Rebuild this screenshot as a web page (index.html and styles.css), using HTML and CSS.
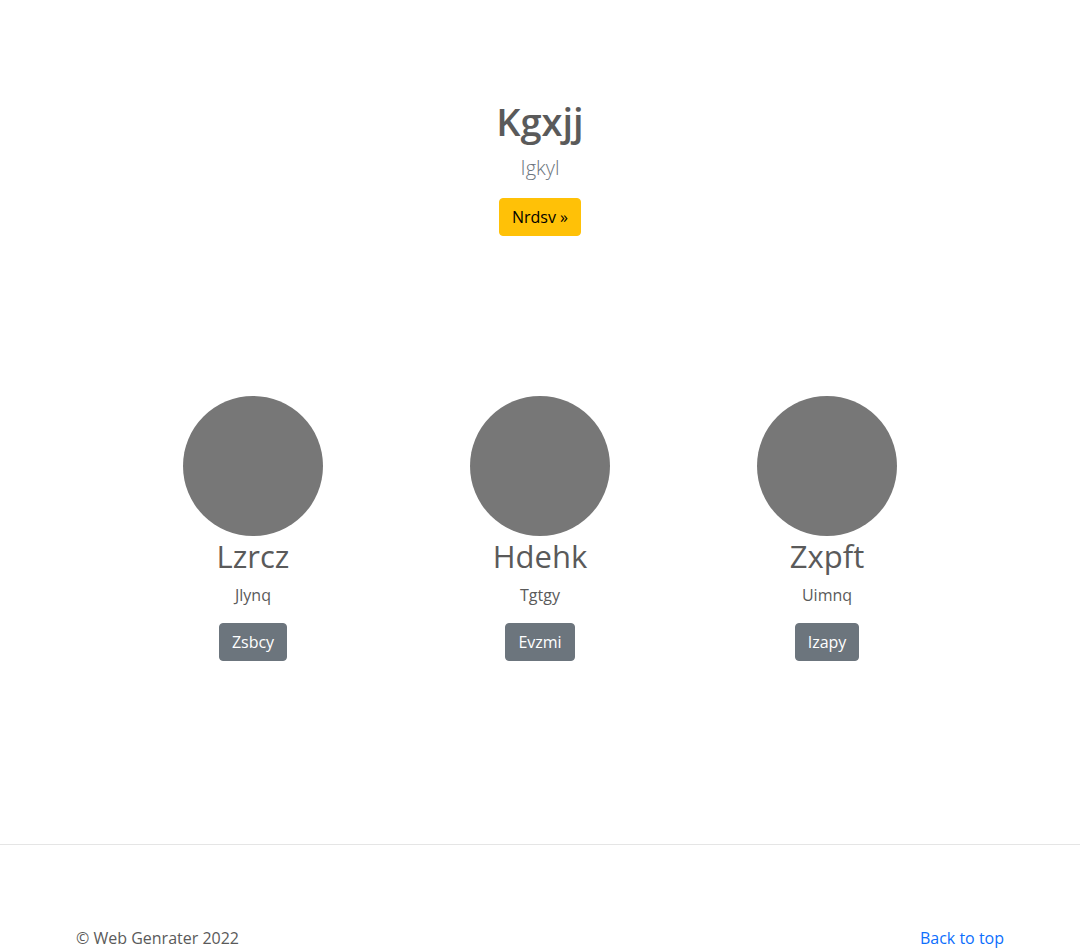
FILE: index.html
```html
<!DOCTYPE html>
<html lang="en">
<head>
<meta charset="utf-8">
<title>Kgxjj</title>
<link rel="stylesheet" href="styles.css">
</head>
<body>
<main>
  <section class="hero">
    <h1 class="hero-title">Kgxjj</h1>
    <p class="lead">Igkyl</p>
    <a class="btn btn-warning" href="#">Nrdsv »</a>
  </section>
  <section class="marketing">
    <div class="feature">
      <div class="circle"></div>
      <h2 class="feature-title">Lzrcz</h2>
      <p class="feature-text">Jlynq</p>
      <a class="btn btn-secondary" href="#">Zsbcy</a>
    </div>
    <div class="feature">
      <div class="circle"></div>
      <h2 class="feature-title">Hdehk</h2>
      <p class="feature-text">Tgtgy</p>
      <a class="btn btn-secondary" href="#">Evzmi</a>
    </div>
    <div class="feature">
      <div class="circle"></div>
      <h2 class="feature-title">Zxpft</h2>
      <p class="feature-text">Uimnq</p>
      <a class="btn btn-secondary" href="#">Izapy</a>
    </div>
  </section>
</main>
<hr class="divider">
<footer class="footer">
  <p class="copyright">© Web Genrater 2022</p>
  <a class="back-top" href="#">Back to top</a>
</footer>
</body>
</html>
```

FILE: styles.css
```css
body {
  margin: 0;
  font-family: "Open Sans", "Noto Sans", sans-serif;
  font-size: 16px;
  line-height: 1.5;
  color: #5a5a5a;
  background: #fff;
}

.hero {
  text-align: center;
  padding-top: 99px;
}

.hero-title {
  font-size: 38px;
  font-weight: 600;
  line-height: 1.2;
  margin: 0 0 8px;
}

.lead {
  font-size: 20px;
  font-weight: 300;
  color: #6c757d;
  margin: 0 0 15px;
}

.btn {
  display: inline-block;
  padding: 6px 12px;
  font-size: 16px;
  line-height: 24px;
  border: 1px solid transparent;
  border-radius: 4px;
  text-decoration: none;
}

.btn-warning {
  background: #ffc107;
  border-color: #ffc107;
  color: #000;
}

.btn-secondary {
  background: #6c757d;
  border-color: #6c757d;
  color: #fff;
}

.marketing {
  width: 861px;
  margin: 160px auto 0;
  display: grid;
  grid-template-columns: repeat(3, 1fr);
}

.feature {
  text-align: center;
}

.circle {
  width: 140px;
  height: 140px;
  border-radius: 50%;
  background: #777;
  margin: 0 auto;
}

.feature-title {
  font-size: 31px;
  font-weight: 400;
  line-height: 1.2;
  margin: 2px 0 8px;
}

.feature-text {
  margin: 0 0 16px;
}

.divider {
  margin: 183px 0 81px;
  border: 0;
  border-top: 1px solid #e5e5e5;
}

.footer {
  max-width: 928px;
  margin: 0 auto;
  padding: 0 16px;
  display: flex;
  justify-content: space-between;
}

.copyright {
  margin: 0 0 16px;
}

.back-top {
  color: #0d6efd;
  text-decoration: none;
  height: 24px;
}
```
